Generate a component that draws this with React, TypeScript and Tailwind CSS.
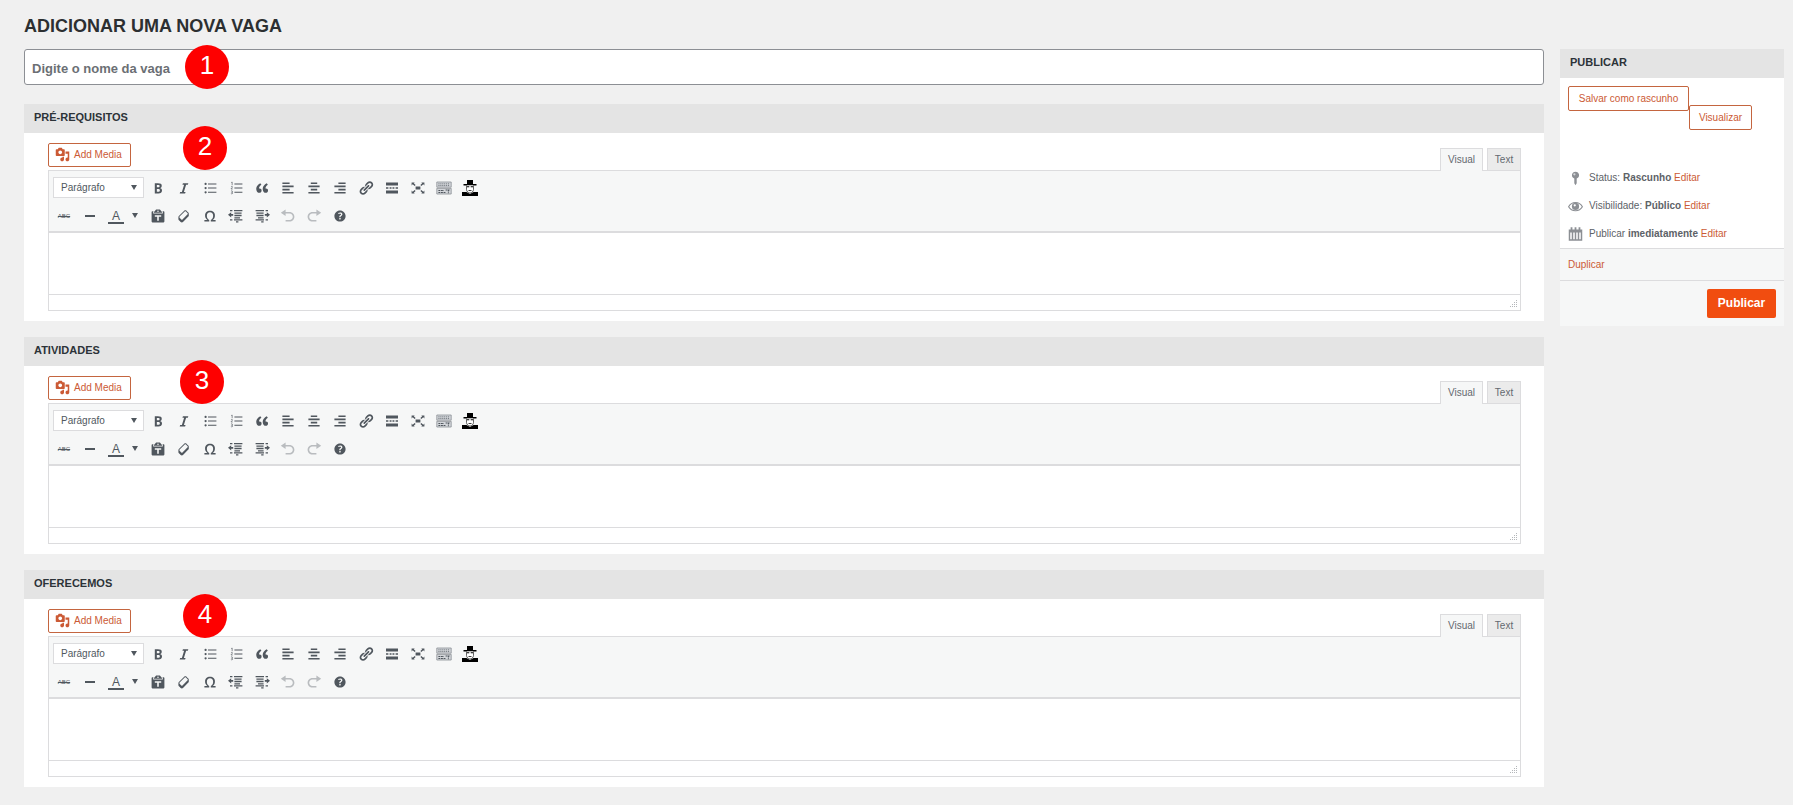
import type {ReactNode} from "react";

type IconProps = {
    children: ReactNode;
    className?: string;
}

const Icon = ({children, className = "size-4"}: IconProps) => (
    <svg className={`shrink-0 ${className}`} viewBox="0 0 20 20" fill="currentColor" aria-hidden="true">
        {children}
    </svg>
)

const firstRow = [
    {
        label: "Negrito",
        icon: <path d="M6 4v13h4.54c1.37 0 2.46-.33 3.26-1 .8-.66 1.2-1.58 1.2-2.77 0-.84-.17-1.51-.51-2.01s-.9-.85-1.67-1.03v-.09c.57-.1 1.02-.4 1.36-.9s.51-1.13.51-1.91c0-1.14-.39-1.98-1.17-2.5C12.75 4.26 11.5 4 9.78 4H6zm2.57 5.15V6.26h1.36c.73 0 1.27.11 1.61.32.34.22.51.58.51 1.07 0 .54-.16.92-.47 1.15s-.82.35-1.51.35h-1.5zm0 2.19h1.6c1.44 0 2.16.53 2.16 1.61 0 .6-.17 1.05-.51 1.34s-.86.43-1.57.43H8.57v-3.38z"/>,
    },
    {
        label: "Itálico",
        icon: <path d="M14.78 6h-2.13l-2.8 9h2.12l-.62 2H4.6l.62-2h2.14l2.8-9H8.03l.62-2h6.75z"/>,
    },
    {
        label: "Lista com marcadores",
        icon: <path d="M4.5 3.5a1.4 1.4 0 1 1 0 2.8 1.4 1.4 0 0 1 0-2.8zM4.5 8.7a1.4 1.4 0 1 1 0 2.8 1.4 1.4 0 0 1 0-2.8zM4.5 14a1.4 1.4 0 1 1 0 2.8 1.4 1.4 0 0 1 0-2.8zM7.5 4.3H18v1.3H7.5zM7.5 9.4H18v1.3H7.5zM7.5 14.7H18V16H7.5z"/>,
    },
    {
        label: "Lista numerada",
        icon: <>
            <path d="M8 4.3h10v1.3H8zM8 9.4h10v1.3H8zM8 14.7h10V16H8z"/>
            <path d="M4 3.2 5.2 2.5v4M3.7 8.5c.5-.6 2-.6 2 .3 0 .8-1.9 1.4-2 2.4h2.2M3.7 13.8c.7-.5 2-.3 2 .6 0 .7-.6.9-1.2.9.7 0 1.4.3 1.4 1 0 1-1.5 1.2-2.3.6" fill="none" stroke="currentColor" strokeWidth=".8"/>
        </>,
    },
    {
        label: "Citação",
        icon: <path d="M9.49 13.22c0-.74-.2-1.38-.61-1.9-.62-.78-1.83-.88-2.53-.72-.29-1.65 1.11-3.75 2.92-4.65L7.88 4c-2.73 1.3-5.42 4.28-4.96 8.05C3.21 14.43 4.59 16 6.54 16c.85 0 1.56-.25 2.12-.75s.83-1.18.83-2.03zm8.05 0c0-.74-.2-1.38-.61-1.9-.63-.78-1.83-.88-2.53-.72-.29-1.65 1.11-3.75 2.92-4.65L15.93 4c-2.73 1.3-5.41 4.28-4.95 8.05.29 2.38 1.66 3.95 3.61 3.95.85 0 1.56-.25 2.12-.75s.83-1.18.83-2.03z"/>,
    },
    {
        label: "Alinhar à esquerda",
        icon: <path d="M12 5V3H3v2h9zm5 4V7H3v2h14zm-5 4v-2H3v2h9zm5 4v-2H3v2h14z"/>,
    },
    {
        label: "Centralizar",
        icon: <path d="M14 5V3H6v2h8zm3 4V7H3v2h14zm-3 4v-2H6v2h8zm3 4v-2H3v2h14z"/>,
    },
    {
        label: "Alinhar à direita",
        icon: <path d="M17 5V3H8v2h9zm0 4V7H3v2h14zm0 4v-2H8v2h9zm0 4v-2H3v2h14z"/>,
    },
    {
        label: "Inserir link",
        icon: <path d="M17.74 2.76c1.68 1.69 1.68 4.41 0 6.1l-1.53 1.52c-1.12 1.12-2.7 1.47-4.14 1.09l2.62-2.61.76-.77.76-.76c.84-.84.84-2.2 0-3.04-.84-.85-2.2-.85-3.04 0l-.77.76-3.38 3.38c-.37-1.44-.02-3.02 1.1-4.14l1.52-1.53c1.69-1.68 4.42-1.68 6.1 0zM8.59 13.43l5.34-5.34c.42-.42.42-1.1 0-1.52-.44-.43-1.13-.39-1.53 0l-5.33 5.34c-.42.42-.42 1.1 0 1.52.44.43 1.13.39 1.52 0zm-.76 2.29l4.14-4.15c.38 1.44.03 3.02-1.09 4.14l-1.52 1.53c-1.69 1.68-4.41 1.68-6.1 0-1.68-1.68-1.68-4.42 0-6.1l1.53-1.52c1.12-1.12 2.7-1.47 4.14-1.1l-4.14 4.15c-.85.84-.85 2.2 0 3.05.84.84 2.2.84 3.04 0z"/>,
    },
    {
        label: "Inserir a tag Leia mais",
        icon: <path d="M2.5 3h15v4h-15zM2.5 9h3v2h-3zM7 9h2.4v2H7zM10.6 9H13v2h-2.4zM14.500 9h3v2h-3zM2.500 13h15v4h-15z"/>,
    },
    {
        label: "Tela cheia",
        icon: <path d="M7 8.2h6v3.6H7zM2 3h4L4.800 4.200 7 6.300 5.800 7.500 3.400 5.400 2 6.800zM18 3h-4l1.200 1.200L13 6.300l1.200 1.200 2.400-2.100L18 6.800zM2 17h4l-1.200-1.200L7 13.700l-1.200-1.200-2.400 2.100L2 13.200zM18 17h-4l1.200-1.200-2.200-2.100 1.200-1.200 2.400 2.100 1.400-1.400z"/>,
    },
    {
        label: "Alternar barra de ferramentas",
        icon: <>
            <path d="M1 2.500h18v6.500H1zM1 10.500h18v7H1z" fill="#d3d6da" stroke="#8c9196"/>
            <path d="M3 4.800h14M3 7h14" stroke="#6c7278" strokeWidth="1.200" strokeDasharray="1.400 1"/>
            <path d="M3 13h7M12 12.500h5M3 15.500h9M15.500 12v4.500" stroke="#50575e" strokeWidth="1.300" strokeDasharray="2.400 .8"/>
        </>,
    },
]

const secondRow = [
    {
        label: "Colar como texto",
        icon: <path d="M12.38 2L15 5v1H5V5l2.64-3h4.74zM10 5c.55 0 1-.44 1-1 0-.55-.45-1-1-1s-1 .45-1 1c0 .56.45 1 1 1zm5.45-1H17c.55 0 1 .45 1 1v12c0 .56-.45 1-1 1H3c-.55 0-1-.44-1-1V5c0-.55.45-1 1-1h1.55L4 4.63V7h12V4.63zM14 11V9H6v2h3v5h2v-5h3z"/>,
    },
    {
        label: "Limpar formatação",
        icon: <path d="M14.29 4.59l1.1 1.11c.41.4.61.94.61 1.47v2.12c0 .53-.2 1.07-.61 1.47l-6.63 6.63c-.4.41-.94.61-1.47.61s-1.07-.2-1.47-.61l-1.11-1.1-1.1-1.11c-.41-.4-.61-.94-.61-1.47v-2.12c0-.54.2-1.07.61-1.48l6.63-6.62c.4-.41.94-.61 1.47-.61s1.06.2 1.47.61zm-6.21 9.7l6.42-6.42c.39-.39.39-1.03 0-1.43L12.36 4.3c-.19-.19-.45-.29-.72-.29s-.52.1-.71.29l-6.42 6.42c-.39.4-.39 1.04 0 1.43l2.14 2.14c.38.38 1.04.38 1.43 0z"/>,
    },
    {
        label: "Caractere especial",
        icon: <path d="M10 5.4c1.27 0 2.24.36 2.91 1.08.66.71 1 1.76 1 3.13 0 1.28-.23 2.37-.69 3.27-.47.89-1.27 1.52-2.22 2.12v2h6v-2h-3.69c.92-.64 1.62-1.34 2.12-2.34.49-1.01.74-2.13.74-3.35 0-1.78-.55-3.19-1.65-4.22S11.92 3.54 10 3.54s-3.43.53-4.52 1.57c-1.1 1.04-1.65 2.44-1.65 4.2 0 1.21.24 2.31.73 3.33.48 1.01 1.19 1.71 2.1 2.36H3v2h6v-2c-.98-.64-1.8-1.28-2.24-2.17-.45-.89-.67-1.96-.67-3.22 0-1.37.33-2.41 1-3.13C7.75 5.76 8.72 5.4 10 5.4z"/>,
    },
    {
        label: "Diminuir recuo",
        icon: <path d="M7.5 2.5H18v1.7H7.5zM2.5 2.5h3v1.7h-3zM8 5.5h9v1.7H8zM8 8.5h9v1.7H8zM8 11.5h7v1.7H8zM2.5 14h3v1.5h-3zM7.5 14H18v1.5H7.5zM10 16.5h3V18h-3zM0 8.5l4-3.3v2.3h2.5v2.2H4V12z"/>,
    },
    {
        label: "Aumentar recuo",
        icon: <path d="M2 2.5h10.5v1.7H2zM14.5 2.5h3v1.7h-3zM3 5.5h9v1.7H3zM3 8.5h9v1.7H3zM5 11.5h7v1.7H5zM14.5 14h3v1.5h-3zM2 14h10.5v1.5H2zM9 16.5h3V18H9zM20 8.5l-4-3.3v2.3h-2.5v2.2H16V12z"/>,
    },
    {
        label: "Desfazer",
        disabled: true,
        icon: <path d="M12 5H7V2L1 6l6 4V7h5c2.2 0 4 1.8 4 4s-1.8 4-4 4H7v2h5c3.3 0 6-2.7 6-6s-2.7-6-6-6z"/>,
    },
    {
        label: "Refazer",
        disabled: true,
        icon: <path d="M8 5h5V2l6 4-6 4V7H8c-2.2 0-4 1.8-4 4s1.8 4 4 4h5v2H8c-3.3 0-6-2.7-6-6s2.7-6 6-6z"/>,
    },
    {
        label: "Atalhos de teclado",
        icon: <path d="M17 10c0-3.87-3.14-7-7-7-3.87 0-7 3.13-7 7s3.13 7 7 7c3.86 0 7-3.13 7-7zm-6.3 1.48H9.14v-.43c0-.38.08-.7.24-.98s.46-.57.88-.89c.41-.29.68-.53.81-.71.14-.18.2-.39.2-.62 0-.25-.09-.44-.28-.58-.19-.13-.45-.19-.79-.19-.58 0-1.25.19-2 .57l-.64-1.28c.87-.49 1.8-.74 2.77-.74.81 0 1.45.2 1.92.58.48.39.71.91.71 1.55 0 .43-.09.8-.29 1.11-.19.32-.57.67-1.11 1.06-.38.28-.61.49-.71.63-.1.15-.15.34-.15.57v.35zm-1.47 2.74c-.18-.17-.27-.42-.27-.73 0-.33.08-.58.26-.75s.43-.25.77-.25c.32 0 .57.09.75.26s.27.42.27.74c0 .3-.09.55-.27.72-.18.18-.43.27-.75.27-.33 0-.58-.09-.76-.26z"/>,
    },
]

type ToolButtonProps = {
    label: string;
    disabled?: boolean;
    children: ReactNode;
}

const ToolButton = ({label, disabled, children}: ToolButtonProps) => (
    <button type="button" aria-label={label} disabled={disabled}
            className="flex w-[26px] h-[21px] items-center justify-center disabled:text-[#b9bcbf]">
        {children}
    </button>
)

const Caret = () => (
    <svg className="w-[6px] h-[5px] shrink-0" viewBox="0 0 6 5" fill="currentColor" aria-hidden="true">
        <path d="M0 0h6L3 5z"/>
    </svg>
)

const Toolbar = ({name}: { name: string }) => (
    <div className="flex flex-col gap-[7px] h-[62px] pt-[6px] bg-[#f6f7f7] border-b-2 border-[#dcdcde] text-[#50575e]">
        <div className="flex items-center pl-1">
            <div className="grid w-[91px] h-[21px] mr-px items-center bg-white border border-[#dcdcde]">
                <select aria-label={`Formato de ${name}`}
                        className="col-start-1 row-start-1 w-full appearance-none pl-[7px] text-[10px] leading-4 outline-none">
                    <option>Parágrafo</option>
                </select>
                <div className="col-start-1 row-start-1 justify-self-end pr-[6px] pointer-events-none"><Caret/></div>
            </div>
            {firstRow.map((tool) => (
                <ToolButton key={tool.label} label={tool.label}><Icon>{tool.icon}</Icon></ToolButton>
            ))}
            <ToolButton label="Anônimo">
                <svg className="size-4 text-black" viewBox="0 0 16 16" fill="currentColor" aria-hidden="true">
                    <path d="M5 0h6v4h3.500v1.500h-13V4H5z"/>
                    <path d="M4.500 5.500v4c0 2 2 3.500 3.500 3.500s3.500-1.500 3.500-3.500v-4" fill="#fff" stroke="currentColor" strokeWidth=".6"/>
                    <path d="M5 6.300h2.300v.9H5zM8.700 6.300H11v.9H8.700zM6.500 10h3v.8h-3zM0 12h4.500L8 14l3.500-2H16v4H0z"/>
                </svg>
            </ToolButton>
        </div>
        <div className="flex items-center pl-[2px]">
            <ToolButton label="Tachado">
                <span className="text-[6px] leading-4 line-through">ABC</span>
            </ToolButton>
            <ToolButton label="Linha horizontal"><span className="w-[10px] h-[2px] bg-[#50575e]"/></ToolButton>
            <ToolButton label="Cor do texto">
                <span className="size-4 border-b-2 border-[#50575e] text-[12px] leading-4 text-center">A</span>
            </ToolButton>
            <button type="button" aria-label="Escolher cor do texto" className="flex w-4 h-[21px] pl-[3px] items-center">
                <Caret/>
            </button>
            {secondRow.map((tool) => (
                <ToolButton key={tool.label} label={tool.label} disabled={tool.disabled}>
                    <Icon>{tool.icon}</Icon>
                </ToolButton>
            ))}
        </div>
    </div>
)

type BadgeProps = {
    number: number;
    className: string;
}

const Badge = ({number, className}: BadgeProps) => (
    <div className={`absolute size-11 rounded-full bg-[#fe0000] text-white text-[26px] leading-10 text-center ${className}`}>
        {number}
    </div>
)

type EditorPanelProps = {
    title: string;
    number: number;
    badgeClass: string;
}

const EditorPanel = ({title, number, badgeClass}: EditorPanelProps) => (
    <section className="relative bg-white">
        <h2 className="h-[29px] pl-[10px] bg-[#e4e4e4] text-[11px] leading-[27px] font-bold text-[#2c3338]">{title}</h2>
        <div className="pl-6 pr-[23px] py-[10px]">
            <div className="flex justify-between h-[27px]">
                <button type="button"
                        className="flex items-center gap-1 w-[83px] h-6 pl-[6px] pb-px bg-white border border-[#c4653f] rounded-[2px] text-[10px] text-[#cb5a35]">
                    <Icon className="size-[15px]">
                        <path d="M13 11V4c0-.55-.45-1-1-1h-1.67L9 1H5L3.67 3H2c-.55 0-1 .45-1 1v7c0 .55.45 1 1 1h10c.55 0 1-.45 1-1zM7 4.5c1.38 0 2.5 1.12 2.5 2.5S8.38 9.5 7 9.5 4.5 8.38 4.5 7 5.62 4.5 7 4.5zM14 6h5v10.5c0 1.38-1.12 2.5-2.5 2.5S14 17.88 14 16.5s1.12-2.5 2.5-2.5c.17 0 .34.02.5.05V9h-3V6zm-4 8.05V13h2v3.5c0 1.38-1.12 2.5-2.5 2.5S7 17.88 7 16.5 8.12 14 9.5 14c.17 0 .34.02.5.05z"/>
                    </Icon>
                    Add Media
                </button>
                <div className="flex gap-1 items-end text-[10px] text-[#646970]">
                    <button type="button"
                            className="z-10 w-[43px] h-[23px] -mb-px pb-[2px] bg-[#f6f7f7] border border-b-0 border-[#dcdcde]">Visual</button>
                    <button type="button"
                            className="w-[34px] h-[22px] pb-px bg-[#ebebeb] border border-b-0 border-[#dcdcde]">Text</button>
                </div>
            </div>
            <div className="border border-[#dcdcde]">
                <Toolbar name={title}/>
                <textarea aria-label={title} className="block w-full h-[61px] resize-none p-2 text-[12px] outline-none"/>
                <div className="flex justify-end items-end h-4 pr-[2px] pb-[3px] border-t border-[#dcdcde]">
                    <svg className="size-2" viewBox="0 0 8 8" fill="#b4b7ba" aria-hidden="true">
                        <path d="M0 7h1v1H0zM2 5h1v1H2zM2 7h1v1H2zM4 3h1v1H4zM4 5h1v1H4zM4 7h1v1H4zM6 1h1v1H6zM6 3h1v1H6zM6 5h1v1H6zM6 7h1v1H6z"/>
                    </svg>
                </div>
            </div>
        </div>
        <Badge number={number} className={badgeClass}/>
    </section>
)

const statusRows = [
    {
        label: "Status:",
        value: "Rascunho",
        icon: <>
            <path d="M10 1.5a4.800 4.800 0 0 1 1.600 9.300V17L10 19.500 8.400 17v-6.200A4.800 4.800 0 0 1 10 1.500z"/>
            <circle cx="8.500" cy="5" r="1.500" fill="#d5d7d9"/>
        </>,
    },
    {
        label: "Visibilidade:",
        value: "Público",
        icon: <>
            <path d="M.8 11c4-7.500 14.400-7.500 18.400 0-4 7-14.400 7-18.400 0z" fill="none" stroke="currentColor" strokeWidth="1.500"/>
            <circle cx="10" cy="10.500" r="4.800"/>
            <circle cx="9" cy="9" r="1.500" fill="#fff"/>
        </>,
    },
    {
        label: "Publicar",
        value: "imediatamente",
        icon: <>
            <path d="M1 4h18v15H1zM3.500 1h2.400v3H3.500zM8.800 1h2.400v3H8.800zM14.100 1h2.400v3h-2.400z"/>
            <path d="M3 8h2v9H3zM7 8h2v9H7zM11 8h2v9h-2zM15 8h2v9h-2z" fill="#fff"/>
        </>,
    },
]

const PublishBox = () => (
    <aside className="w-[224px] shrink-0 text-[10px] text-[#5d6267]">
        <h2 className="h-[29px] pl-[10px] bg-[#e4e4e4] text-[11px] leading-[27px] font-bold text-[#2c3338]">PUBLICAR</h2>
        <div className="h-[170px] px-2 pt-2 bg-white">
            <div className="flex items-start">
                <button type="button"
                        className="w-[121px] h-[25px] pb-px border border-[#c4653f] rounded-[2px] text-[#cb5a35]">Salvar como rascunho</button>
                <button type="button"
                        className="w-[63px] h-[25px] pb-px mt-[19px] border border-[#c4653f] rounded-[2px] text-[#cb5a35]">Visualizar</button>
            </div>
            <ul className="flex flex-col gap-3 pt-[40px]">
                {statusRows.map((row) => (
                    <li key={row.label} className="flex items-center gap-[6px] leading-4">
                        <Icon className="w-[15px] h-4 text-[#8c8f94]">{row.icon}</Icon>
                        <p>{row.label} <b>{row.value}</b> <a href="#" className="text-[#cb5a35]">Editar</a></p>
                    </li>
                ))}
            </ul>
        </div>
        <div className="h-8 px-2 bg-[#f6f7f7] border-t border-[#dcdcde] leading-[31px]">
            <a href="#" className="text-[#cb5a35]">Duplicar</a>
        </div>
        <div className="flex justify-end px-2 py-2 bg-[#f6f7f7] border-t border-[#dcdcde]">
            <button type="button" className="w-[69px] h-[29px] pb-[2px] bg-[#f14d10] rounded-[2px] text-[12px] font-bold text-white">Publicar</button>
        </div>
    </aside>
)

export default function App() {
    return (
        <div className="min-h-screen bg-[#f0f0f0] pl-6 pr-[9px] pt-4 pb-4 font-['Liberation_Sans',Arial,sans-serif]">
            <h1 className="h-[33px] text-[18px] leading-5 font-bold text-[#2c2f31]">ADICIONAR UMA NOVA VAGA</h1>
            <div className="flex items-start gap-4">
                <main className="flex flex-col flex-1 gap-4">
                    <div className="relative mb-[3px]">
                        <input type="text" aria-label="Nome da vaga" placeholder="Digite o nome da vaga"
                               className="block w-full h-9 px-[7px] pt-[2px] bg-white border border-[#8c8f94] rounded-[3px] text-[13px] font-bold placeholder:text-[#6b6f74] outline-none"/>
                        <Badge number={1} className="left-[161px] -top-1"/>
                    </div>
                    <EditorPanel title="PRÉ-REQUISITOS" number={2} badgeClass="left-[159px] top-[22px]"/>
                    <EditorPanel title="ATIVIDADES" number={3} badgeClass="left-[156px] top-[23px]"/>
                    <EditorPanel title="OFERECEMOS" number={4} badgeClass="left-[159px] top-[24px]"/>
                </main>
                <PublishBox/>
            </div>
        </div>
    )
}
